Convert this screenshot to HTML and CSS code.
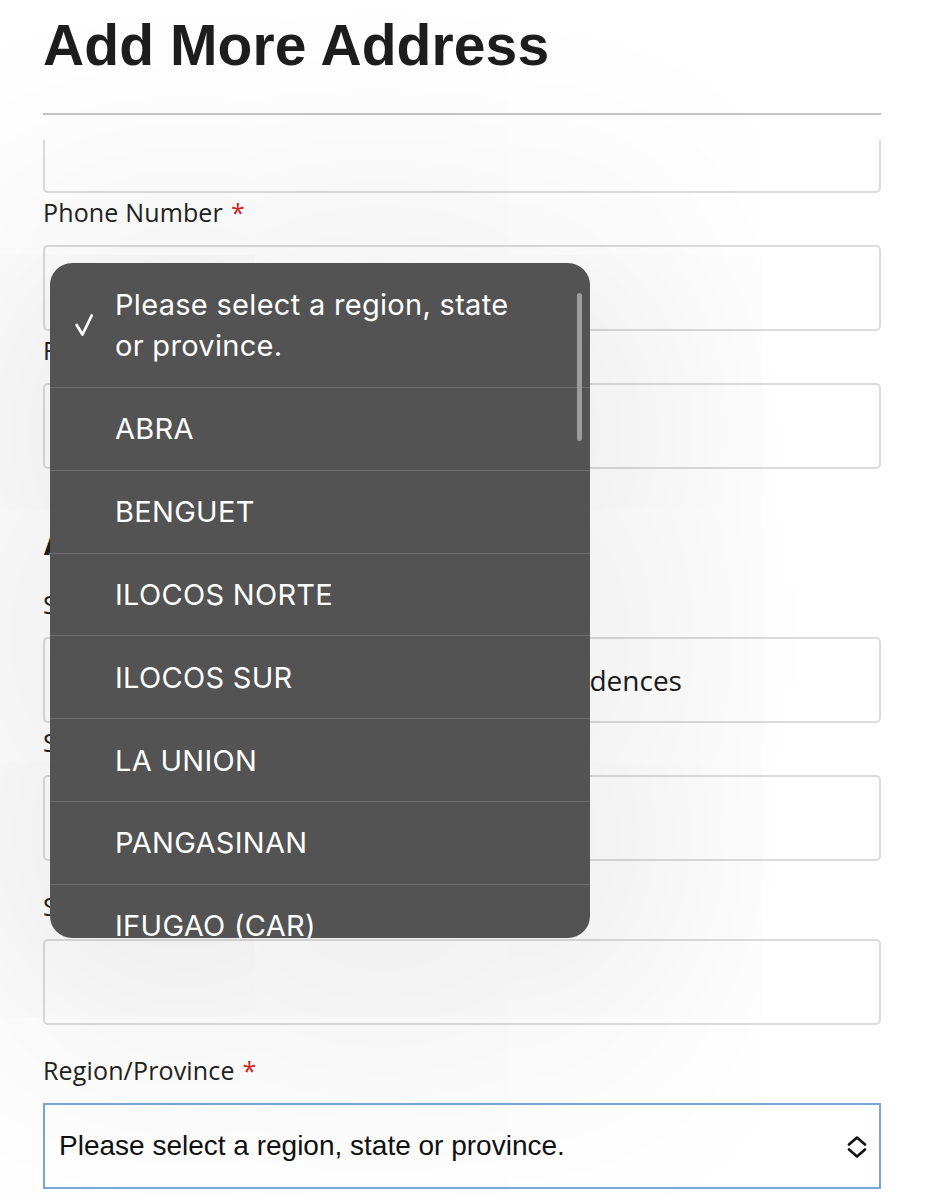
FILE: index.html
```html
<!DOCTYPE html>
<html lang="en">
<head>
<meta charset="utf-8">
<title>Add More Address</title>
<link rel="stylesheet" href="styles.css">
</head>
<body>
<div class="page">
  <h1 class="title">Add More Address</h1>
  <hr class="rule">
  <div class="scroller">
    <div class="field first">
      <input class="input" type="text" value="">
    </div>
    <div class="field">
      <label class="label">Phone Number<span class="req">*</span></label>
      <input class="input" type="text" value="">
    </div>
    <div class="field">
      <label class="label">Fax</label>
      <input class="input" type="text" value="">
    </div>
    <h2 class="section">Address</h2>
    <div class="field">
      <label class="label">Street Address<span class="req">*</span></label>
      <input class="input" type="text" value="Blk 7 Unit 1204 Tower 3, Avida Land Residences">
    </div>
    <div class="field">
      <label class="label">Street Address: Line 2</label>
      <input class="input" type="text" value="">
    </div>
    <div class="field wide">
      <label class="label">Street Address: Line 3</label>
      <input class="input" type="text" value="">
    </div>
    <div class="field wide">
      <label class="label">Region/Province<span class="req">*</span></label>
      <div class="select">
        <span class="select-text">Please select a region, state or province.</span>
        <svg class="chevron" width="20" height="22" viewBox="0 0 20 22" aria-hidden="true">
          <path d="M2 8.5 L10 1.5 L18 8.5" fill="none" stroke="#111" stroke-width="2.6" stroke-linecap="round" stroke-linejoin="round"/>
          <path d="M2 13.5 L10 20.5 L18 13.5" fill="none" stroke="#111" stroke-width="2.6" stroke-linecap="round" stroke-linejoin="round"/>
        </svg>
      </div>
    </div>
  </div>
</div>

<div class="menu">
  <div class="menu-item selected">
    <svg class="check" width="20" height="24" viewBox="0 0 20 24" aria-hidden="true">
      <path d="M2.7 12 L8.5 21.5 L17.7 2.5" fill="none" stroke="#fff" stroke-width="2.8" stroke-linecap="round" stroke-linejoin="round"/>
    </svg>
    <span class="menu-text">Please select a region, state or province.</span>
  </div>
  <div class="menu-item"><span class="menu-text">ABRA</span></div>
  <div class="menu-item"><span class="menu-text">BENGUET</span></div>
  <div class="menu-item"><span class="menu-text">ILOCOS NORTE</span></div>
  <div class="menu-item"><span class="menu-text">ILOCOS SUR</span></div>
  <div class="menu-item"><span class="menu-text">LA UNION</span></div>
  <div class="menu-item"><span class="menu-text">PANGASINAN</span></div>
  <div class="menu-item"><span class="menu-text">IFUGAO (CAR)</span></div>
  <div class="scrollbar"></div>
</div>
</body>
</html>
```

FILE: styles.css
```css
html, body {
  margin: 0;
  padding: 0;
  height: 1200px;
  overflow: hidden;
  background: #ffffff;
}

body {
  font-family: "Open Sans", "Liberation Sans", sans-serif;
  color: #222;
  position: relative;
}

.page {
  padding: 0 44px 0 43px;
  box-sizing: border-box;
  width: 925px;
}

.title {
  font-family: "Liberation Sans", Arial, sans-serif;
  font-weight: 700;
  font-size: 57px;
  line-height: 64px;
  margin: 13px 0 0 0;
  color: #1e1e1e;
  letter-spacing: 0.1px;
}

.rule {
  margin: 36px 0 0 0;
  border: 0;
  border-top: 2px solid #c4c4c4;
  height: 0;
}

.scroller {
  margin-top: 25px;
  height: 1060px;
  overflow: hidden;
}

.field {
  display: flex;
  flex-direction: column;
}

.field.first {
  margin-top: -33px;
}

.label {
  display: block;
  font-size: 25px;
  line-height: 32px;
  margin: 3px 0 17px 0;
  color: #222;
  letter-spacing: 0.15px;
}

.field.wide .label {
  margin-top: 29px;
}

.req {
  color: #d0271d;
  margin-left: 8px;
}

.input {
  display: block;
  box-sizing: border-box;
  width: 100%;
  height: 86px;
  margin: 0;
  border: 2px solid #dcdcdc;
  border-radius: 5px;
  background: transparent;
  padding: 0 18px;
  font-family: "Open Sans", sans-serif;
  font-size: 28px;
  color: #1a1a1a;
  outline: none;
}

.section {
  font-family: "Liberation Sans", Arial, sans-serif;
  font-weight: 700;
  font-size: 36px;
  line-height: 40px;
  margin: 54px 0 22px 0;
  color: #1e1e1e;
}

.select {
  box-sizing: border-box;
  height: 86px;
  border: 2px solid #7aa6d8;
  background: transparent;
  display: flex;
  align-items: center;
  justify-content: space-between;
  padding: 0 12px 0 14px;
}

.select-text {
  font-family: "Liberation Sans", Arial, sans-serif;
  font-size: 28px;
  color: #111;
}

.chevron {
  display: block;
  margin-top: 2px;
}

/* native-like popup menu */
.menu {
  position: absolute;
  left: 50px;
  top: 263px;
  width: 540px;
  height: 675px;
  background: #535353;
  border-radius: 22px;
  overflow: hidden;
  box-shadow: 0 30px 260px 70px rgba(0, 0, 0, 0.085);
  font-family: Inter, Roboto, "Noto Sans", sans-serif;
  color: #ffffff;
}

.menu-item {
  box-sizing: border-box;
  height: 82.8px;
  border-top: 1px solid #6d6d6d;
  display: flex;
  align-items: center;
  padding-left: 65px;
  padding-right: 60px;
  font-size: 29px;
  letter-spacing: 0.3px;
  line-height: 41px;
  position: relative;
}

.menu-item.selected {
  height: 124px;
  border-top: 0;
  padding-top: 0;
}

.check {
  position: absolute;
  left: 24px;
  top: 50px;
}

.scrollbar {
  position: absolute;
  right: 8px;
  top: 30px;
  width: 5px;
  height: 148px;
  border-radius: 3px;
  background: #9c9c9c;
}
```
